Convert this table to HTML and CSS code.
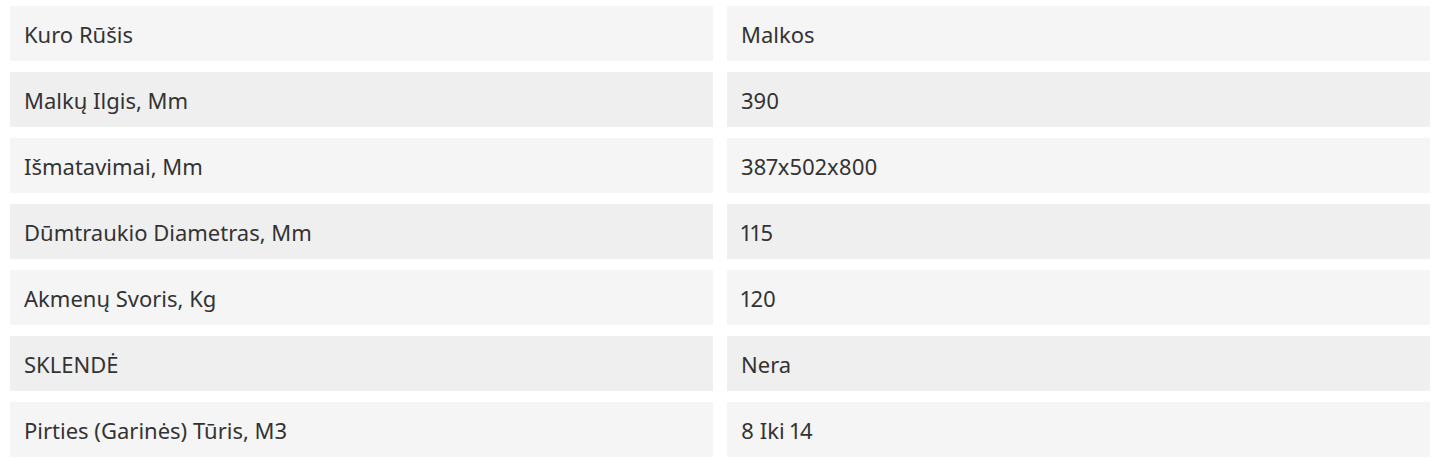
FILE: index.html
```html
<!DOCTYPE html>
<html lang="lt">
<head>
<meta charset="utf-8">
<title>Specifikacijos</title>
<link rel="stylesheet" href="styles.css">
</head>
<body>
<div class="specs">
  <div class="row odd"><div class="cell">Kuro Rūšis</div><div class="cell">Malkos</div></div>
  <div class="row even"><div class="cell">Malkų Ilgis, Mm</div><div class="cell">390</div></div>
  <div class="row odd"><div class="cell">Išmatavimai, Mm</div><div class="cell">387x502x800</div></div>
  <div class="row even"><div class="cell">Dūmtraukio Diametras, Mm</div><div class="cell">115</div></div>
  <div class="row odd"><div class="cell">Akmenų Svoris, Kg</div><div class="cell">120</div></div>
  <div class="row even"><div class="cell">SKLENDĖ</div><div class="cell">Nera</div></div>
  <div class="row odd"><div class="cell">Pirties (Garinės) Tūris, M3</div><div class="cell">8 Iki 14</div></div>
</div>
</body>
</html>
```
FILE: styles.css
```css
html, body {
  margin: 0;
  padding: 0;
  background: #ffffff;
}
body {
  font-family: "Noto Sans", "Open Sans", sans-serif;
  font-size: 22px;
  color: #333333;
  font-variant-numeric: proportional-nums;
}
.specs {
  display: flex;
  flex-direction: column;
  gap: 11px;
  padding: 6px 10px;
}
.row {
  display: grid;
  grid-template-columns: 1fr 1fr;
  column-gap: 14px;
}
.cell {
  height: 55px;
  display: flex;
  align-items: center;
  padding: 0 14px;
  box-sizing: border-box;
  line-height: 1;
}
.odd .cell {
  background: #f5f5f5;
}
.even .cell {
  background: #efefef;
}
```
